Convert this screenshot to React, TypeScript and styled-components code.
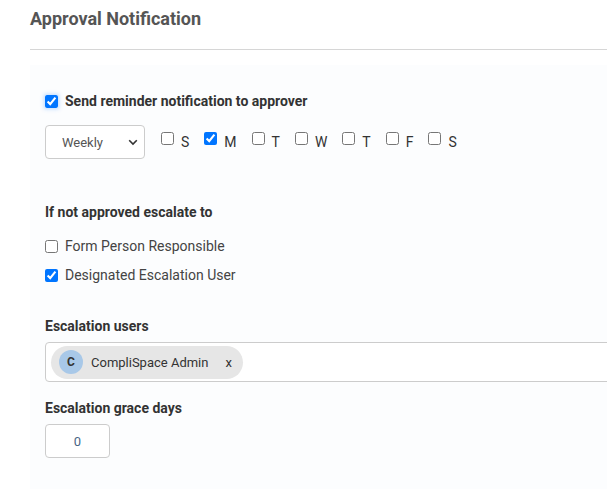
import React from "react";
import styled, { createGlobalStyle } from "styled-components";

const Global = createGlobalStyle`
  html, body { margin: 0; padding: 0; background: #ffffff; }
  body { font-family: Roboto, "Liberation Sans", Arial, sans-serif; overflow: hidden; }
  * { box-sizing: border-box; }
`;

const Page = styled.div`
  padding: 8px 0 0 30px;
  height: 489px;
  overflow: hidden;
  display: flex;
  flex-direction: column;
`;

const Title = styled.h2`
  margin: 0;
  font-size: 18px;
  line-height: 22px;
  font-weight: 700;
  color: #555555;
`;

const Divider = styled.hr`
  margin: 19px 0 0 0;
  border: none;
  height: 1px;
  background: #d6d6d6;
`;

const Panel = styled.section`
  margin-top: 15px;
  flex: 1;
  background: #fcfdfe;
  padding: 28px 0 0 15px;
  display: flex;
  flex-direction: column;
  overflow: hidden;
`;

const CheckRow = styled.label<{ $mt?: number; $bold?: boolean }>`
  display: flex;
  align-items: center;
  gap: 7px;
  margin-top: ${(p) => p.$mt ?? 0}px;
  font-size: 14px;
  line-height: 17px;
  font-weight: ${(p) => (p.$bold ? 700 : 400)};
  color: ${(p) => (p.$bold ? "#333333" : "#444444")};
`;

const Check = styled.input.attrs({ type: "checkbox" })<{ $focus?: boolean }>`
  width: 13px;
  height: 13px;
  margin: 0;
  flex: none;
  accent-color: #0075ff;
  box-shadow: ${(p) => (p.$focus ? "0 0 4px 1px rgba(0,117,255,0.25)" : "none")};
  border-radius: 2px;
`;

const FreqRow = styled.div`
  display: flex;
  align-items: flex-start;
  margin-top: 15px;
  gap: 16px;
`;

const SelectWrap = styled.div`
  position: relative;
  width: 100px;
  height: 34px;
  flex: none;
`;

const Select = styled.select`
  appearance: none;
  width: 100%;
  height: 100%;
  border: 1px solid #cccccc;
  border-radius: 4px;
  background: #ffffff;
  padding: 0 0 0 16px;
  font-family: inherit;
  font-size: 13px;
  color: #555555;
`;

const Chevron = styled.svg`
  position: absolute;
  right: 7px;
  top: 14px;
  pointer-events: none;
`;

const Days = styled.div`
  display: flex;
  margin-top: 7px;
`;

const Day = styled.label`
  display: inline-flex;
  align-items: flex-start;
  margin-right: 15px;
  font-size: 14px;
  line-height: 17px;
  color: #333333;
`;

const DayText = styled.span`
  margin-left: 7px;
  padding-top: 2px;
`;

const SectionLabel = styled.div<{ $mt: number }>`
  margin-top: ${(p) => p.$mt}px;
  font-size: 14px;
  line-height: 17px;
  font-weight: 700;
  color: #333333;
`;

const MultiBox = styled.div`
  margin-top: 7px;
  margin-right: -20px;
  height: 40px;
  border: 1px solid #cccccc;
  border-radius: 4px;
  background: #ffffff;
  display: flex;
  align-items: center;
  padding-left: 5px;
`;

const Chip = styled.div`
  display: inline-flex;
  align-items: center;
  height: 33px;
  border-radius: 17px;
  background: #e6e6e6;
  padding: 0 11px 0 8px;
`;

const Avatar = styled.span`
  width: 24px;
  height: 24px;
  border-radius: 50%;
  background: #a8c8e8;
  display: inline-flex;
  align-items: center;
  justify-content: center;
  font-size: 12px;
  font-weight: 700;
  color: #333333;
`;

const ChipText = styled.span`
  margin-left: 8px;
  font-size: 13px;
  color: #333333;
`;

const ChipClose = styled.span`
  margin-left: 17px;
  font-size: 13px;
  color: #333333;
`;

const NumberInput = styled.input`
  margin-top: 7px;
  width: 65px;
  height: 34px;
  border: 1px solid #cccccc;
  border-radius: 4px;
  background: #ffffff;
  text-align: center;
  font-family: inherit;
  font-size: 13px;
  color: #4a6585;
  padding: 0;
`;

const days = [
  { l: "S", c: false },
  { l: "M", c: true },
  { l: "T", c: false },
  { l: "W", c: false },
  { l: "T", c: false },
  { l: "F", c: false },
  { l: "S", c: false },
];

export default function App() {
  return (
    <>
      <Global />
      <Page>
        <Title>Approval Notification</Title>
        <Divider />
        <Panel>
          <CheckRow $bold>
            <Check defaultChecked $focus />
            Send reminder notification to approver
          </CheckRow>
          <FreqRow>
            <SelectWrap>
              <Select defaultValue="Weekly">
                <option>Daily</option>
                <option>Weekly</option>
                <option>Monthly</option>
              </Select>
              <Chevron width="10" height="7" viewBox="0 0 10 7">
                <path d="M1.2 1.2 L5 5 L8.8 1.2" fill="none" stroke="#333" strokeWidth="1.6" />
              </Chevron>
            </SelectWrap>
            <Days>
              {days.map((d, i) => (
                <Day key={i}>
                  <Check defaultChecked={d.c} />
                  <DayText>{d.l}</DayText>
                </Day>
              ))}
            </Days>
          </FreqRow>
          <SectionLabel $mt={45}>If not approved escalate to</SectionLabel>
          <CheckRow $mt={17}>
            <Check />
            Form Person Responsible
          </CheckRow>
          <CheckRow $mt={12}>
            <Check defaultChecked />
            Designated Escalation User
          </CheckRow>
          <SectionLabel $mt={34}>Escalation users</SectionLabel>
          <MultiBox>
            <Chip>
              <Avatar>C</Avatar>
              <ChipText>CompliSpace Admin</ChipText>
              <ChipClose>x</ChipClose>
            </Chip>
          </MultiBox>
          <SectionLabel $mt={18}>Escalation grace days</SectionLabel>
          <NumberInput defaultValue="0" />
        </Panel>
      </Page>
    </>
  );
}
